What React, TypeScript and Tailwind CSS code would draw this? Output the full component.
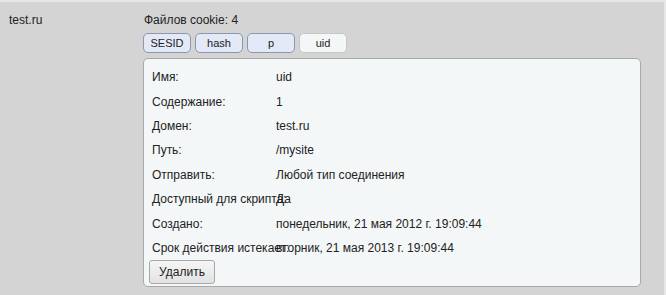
const tabs = [
  { name: "SESID", active: false },
  { name: "hash", active: false },
  { name: "p", active: false },
  { name: "uid", active: true },
];

const rows: [string, string][] = [
  ["Имя:", "uid"],
  ["Содержание:", "1"],
  ["Домен:", "test.ru"],
  ["Путь:", "/mysite"],
  ["Отправить:", "Любой тип соединения"],
  ["Доступный для скрипта:", "Да"],
  ["Создано:", "понедельник, 21 мая 2012 г. 19:09:44"],
  ["Срок действия истекает:", "вторник, 21 мая 2013 г. 19:09:44"],
];

export default function App() {
  return (
    <div
      className="h-[295px] w-[666px] overflow-hidden border-t-2 border-r-2 border-t-[#e6e6e6] border-r-[#e6e6e6] bg-[#d4d4d4] text-[12px] text-[#222]"
      style={{ fontFamily: '"Liberation Sans", Arial, sans-serif' }}
    >
      <div className="flex">
        <div className="w-[143px] shrink-0 pl-[9px] pt-[9px]">test.ru</div>
        <div className="w-[498px] shrink-0 pt-[9px]">
          <div className="pl-px leading-[18px]">Файлов cookie: 4</div>
          <div className="mt-[4px] flex gap-[4px]">
            {tabs.map((t) => (
              <div
                key={t.name}
                className={
                  t.active
                    ? "flex h-[20px] w-[48px] items-center justify-center rounded-[5px] border border-[#c6c6c6] bg-[#f4f7f8] text-[11px]"
                    : "flex h-[20px] w-[48px] items-center justify-center rounded-[5px] border border-[#8b97ad] bg-[#e3e9f6] text-[11px]"
                }
              >
                {t.name}
              </div>
            ))}
          </div>
          <div className="mt-[5px] h-[229px] rounded-[5px] border border-[#a9a9a9] bg-[#f4f7f8] pl-[5px] pt-[6px]">
            <div className="pl-[3px]">
              {rows.map(([k, v]) => (
                <div key={k} className="flex h-[24.4px] items-center whitespace-nowrap">
                  <div className="w-[124px] shrink-0 overflow-visible">{k}</div>
                  <div>{v}</div>
                </div>
              ))}
            </div>
            <button className="mt-0 h-[24px] w-[66px] rounded-[3px] border border-[#a8a8a8] bg-gradient-to-b from-[#f6f6f6] to-[#e2e2e2] text-[12px] text-[#222]">
              Удалить
            </button>
          </div>
        </div>
      </div>
    </div>
  );
}
